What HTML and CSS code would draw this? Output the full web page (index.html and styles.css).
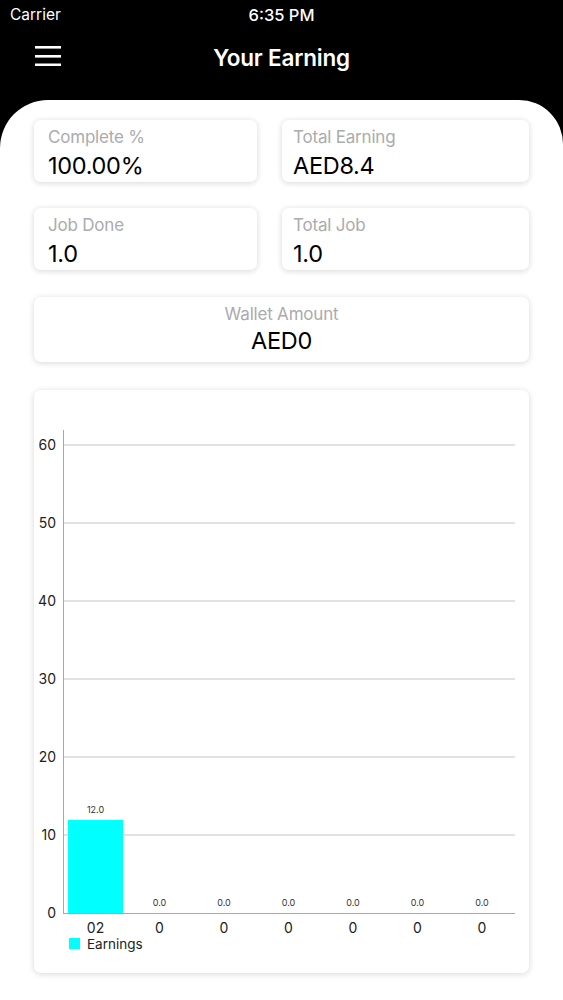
FILE: index.html
```html
<!DOCTYPE html>
<html>
<head>
<meta charset="utf-8">
<link rel="stylesheet" href="styles.css">
</head>
<body>
<div class="screen">
  <header class="top">
    <div class="status">
      <span class="carrier">Carrier</span>
      <span class="time">6:35 PM</span>
    </div>
    <div class="nav">
      <button class="menu" aria-label="menu">
        <svg width="26" height="22" viewBox="0 0 26 22"><rect x="0" y="2" width="26" height="2.6" fill="#fff"/><rect x="0" y="11" width="26" height="2.6" fill="#fff"/><rect x="0" y="19.5" width="26" height="2.6" fill="#fff"/></svg>
      </button>
      <h1 class="title">Your Earning</h1>
    </div>
  </header>
  <main class="panel">
    <div class="grid">
      <div class="card stat"><div class="label">Complete %</div><div class="value">100.00%</div></div>
      <div class="card stat right"><div class="label">Total Earning</div><div class="value">AED8.4</div></div>
      <div class="card stat"><div class="label">Job Done</div><div class="value">1.0</div></div>
      <div class="card stat right"><div class="label">Total Job</div><div class="value">1.0</div></div>
      <div class="card stat wide"><div class="label">Wallet Amount</div><div class="value">AED0</div></div>
    </div>
    <div class="card chart">
      <svg class="chart-svg" width="495" height="583" viewBox="0 0 495 583">
        <g class="grid-lines">
          <line x1="29" y1="55" x2="481" y2="55"/>
          <line x1="29" y1="133" x2="481" y2="133"/>
          <line x1="29" y1="211" x2="481" y2="211"/>
          <line x1="29" y1="289" x2="481" y2="289"/>
          <line x1="29" y1="367" x2="481" y2="367"/>
          <line x1="29" y1="445" x2="481" y2="445"/>
        </g>
        <rect class="bar" x="34" y="430" width="55" height="93"/>
        <line class="axis" x1="29.5" y1="40" x2="29.5" y2="523.5"/>
        <line class="axis" x1="29" y1="523.5" x2="481" y2="523.5"/>
        <g class="ylab">
          <text x="22" y="60">60</text>
          <text x="22" y="138">50</text>
          <text x="22" y="216">40</text>
          <text x="22" y="294">30</text>
          <text x="22" y="372">20</text>
          <text x="22" y="450">10</text>
          <text x="22" y="528">0</text>
        </g>
        <g class="vlab">
          <text x="61.5" y="423">12.0</text>
          <text x="125.5" y="516">0.0</text>
          <text x="190" y="516">0.0</text>
          <text x="254.5" y="516">0.0</text>
          <text x="319" y="516">0.0</text>
          <text x="383.5" y="516">0.0</text>
          <text x="448" y="516">0.0</text>
        </g>
        <g class="xlab">
          <text x="61.5" y="543">02</text>
          <text x="125.5" y="543">0</text>
          <text x="190" y="543">0</text>
          <text x="254.5" y="543">0</text>
          <text x="319" y="543">0</text>
          <text x="383.5" y="543">0</text>
          <text x="448" y="543">0</text>
        </g>
        <rect class="bar" x="35" y="548" width="11" height="11"/>
        <text class="legend" x="53" y="559">Earnings</text>
      </svg>
    </div>
  </main>
</div>
</body>
</html>
```

FILE: styles.css
```css
* { box-sizing: border-box; }
html, body { margin: 0; padding: 0; }
body {
  background: #000;
  font-family: "Inter", "Liberation Sans", Arial, sans-serif;
  width: 563px;
  height: 1000px;
  overflow: hidden;
}
.screen {
  display: flex;
  flex-direction: column;
  height: 1000px;
}
.top {
  background: #000;
  color: #fff;
  height: 100px;
  flex: none;
}
.status {
  position: relative;
  height: 28px;
  display: flex;
  align-items: center;
  padding-left: 10px;
}
.carrier {
  font-size: 15.5px;
  font-weight: 400;
}
.time {
  position: absolute;
  left: 0;
  right: 0;
  top: 5px;
  text-align: center;
  font-size: 16.5px;
  font-weight: 500;
}
.nav {
  position: relative;
  height: 58px;
  display: flex;
  align-items: center;
  justify-content: center;
}
.menu {
  position: absolute;
  left: 35px;
  top: 16px;
  background: none;
  border: 0;
  padding: 0;
  line-height: 0;
}
.title {
  margin: 0;
  font-size: 22.5px;
  font-weight: 600;
  letter-spacing: -0.2px;
  padding-top: 0;
}
.panel {
  flex: 1;
  background: #fff;
  border-radius: 48px 44px 0 0;
  padding: 20px 34px 0 34px;
}
.grid {
  display: grid;
  grid-template-columns: 223fr 247fr;
  column-gap: 25px;
  row-gap: 26px;
}
.card {
  background: #fff;
  border-radius: 7px;
  box-shadow: 0 1px 6px rgba(0, 0, 0, 0.16);
}
.stat {
  height: 62px;
  padding: 7px 14px 0 14px;
}
.stat.right {
  padding-left: 11px;
}
.stat.wide {
  grid-column: 1 / 3;
  height: 65px;
  text-align: center;
  margin-top: 1px;
  padding-top: 7px;
}
.label {
  color: #ababae;
  font-size: 17px;
  line-height: 20px;
  letter-spacing: -0.2px;
}
.value {
  color: #000;
  font-size: 23.5px;
  line-height: 28px;
  letter-spacing: -0.3px;
  margin-top: 5px;
}
.wide .value {
  margin-top: 3px;
}
.chart {
  margin-top: 28px;
  height: 583px;
}
.chart-svg { display: block; }
.grid-lines line { stroke: #c4c4c6; stroke-width: 1; }
.axis { stroke: #a8a8aa; stroke-width: 1; }
.bar { fill: #00ffff; }
.ylab text {
  font-size: 14px;
  text-anchor: end;
  fill: #222;
}
.vlab text {
  font-size: 9px;
  text-anchor: middle;
  fill: #333;
}
.xlab text {
  font-size: 14px;
  text-anchor: middle;
  fill: #222;
}
.legend {
  font-size: 13.5px;
  fill: #222;
}
```
